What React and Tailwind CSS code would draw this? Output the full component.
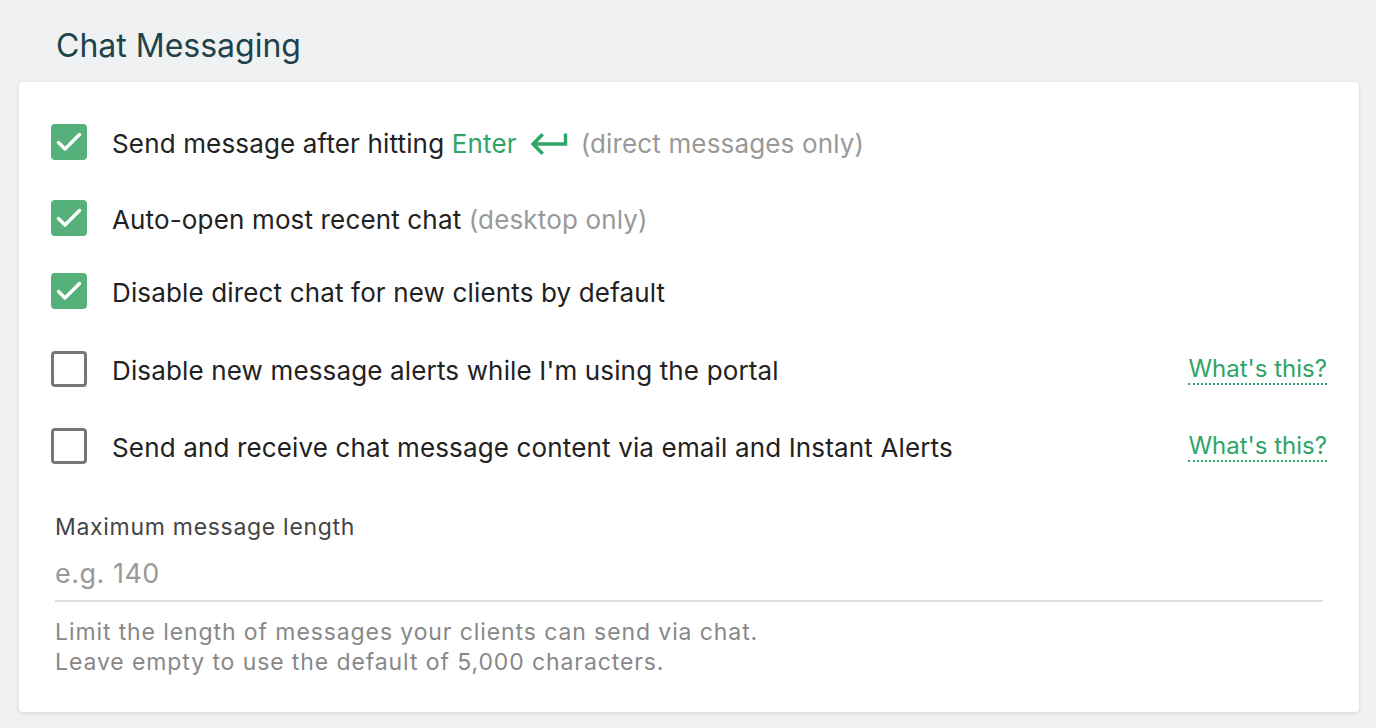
import { useState } from "react";

const font = { fontFamily: "Inter, 'Noto Sans', sans-serif" };

function Box({ checked, onClick }) {
  return checked ? (
    <button
      onClick={onClick}
      className="w-9 h-9 shrink-0 rounded-[4px] bg-[#55b179] flex items-center justify-center"
    >
      <svg width="28" height="28" viewBox="0 0 28 28" fill="none">
        <path d="M3.5 14.5l6.5 6.5L24.5 6.5" stroke="#fff" strokeWidth="3.4" strokeLinecap="round" strokeLinejoin="round" />
      </svg>
    </button>
  ) : (
    <button
      onClick={onClick}
      className="w-9 h-9 shrink-0 rounded-[4px] border-[3px] border-[#777] bg-white"
    />
  );
}

function WhatsThis() {
  return (
    <a className="ml-auto mt-[2px] text-[24px] text-[#2ea566] border-b-2 border-dotted border-[#2ea566] leading-[28px] cursor-pointer">
      What's this?
    </a>
  );
}

export default function App() {
  const [checks, setChecks] = useState([true, true, true, false, false]);
  const toggle = (i) => setChecks((c) => c.map((v, j) => (j === i ? !v : v)));

  return (
    <div className="min-h-screen bg-[#f0f1f3] pl-[19px] pr-[17px] pt-[26px] pb-4" style={font}>
      <h2 className="text-[32px] leading-[40px] text-[#1e444a] ml-[37px] mb-[16px]">Chat Messaging</h2>
      <div className="bg-white rounded-[4px] shadow-[0_1px_4px_rgba(0,0,0,0.12)] px-8 pt-[42px] pb-[35px]">
        <div className="flex flex-col text-[26px] text-[#222]">
          <div className="flex items-center gap-[25px] h-9">
            <Box checked={checks[0]} onClick={() => toggle(0)} />
            <span className="flex items-center pt-[3px] tracking-[0.15px]">
              Send message after hitting&nbsp;<span className="text-[#2ea566]">Enter</span>
              <svg className="ml-[12px] mr-[13px]" width="39" height="24" viewBox="0 0 39 24" fill="none">
                <path d="M36.5 1.5v10.5H4" stroke="#2ea566" strokeWidth="3.4" strokeLinejoin="miter" />
                <path d="M12.5 3.5L4 12l8.5 8.5" stroke="#2ea566" strokeWidth="3.4" strokeLinecap="square" strokeLinejoin="miter" />
              </svg>
              <span className="text-[#999]">(direct messages only)</span>
            </span>
          </div>
          <div className="flex items-center gap-[25px] h-9 mt-[40px]">
            <Box checked={checks[1]} onClick={() => toggle(1)} />
            <span className="pt-[3px] tracking-[0.15px]">
              Auto-open most recent chat <span className="text-[#999]">(desktop only)</span>
            </span>
          </div>
          <div className="flex items-center gap-[25px] h-9 mt-[37px]">
            <Box checked={checks[2]} onClick={() => toggle(2)} />
            <span className="pt-[3px] tracking-[0.15px]">Disable direct chat for new clients by default</span>
          </div>
          <div className="flex items-center gap-[25px] h-9 mt-[42px]">
            <Box checked={checks[3]} onClick={() => toggle(3)} />
            <span className="pt-[3px] tracking-[0.15px]">Disable new message alerts while I'm using the portal</span>
            <WhatsThis />
          </div>
          <div className="flex items-center gap-[25px] h-9 mt-[41px]">
            <Box checked={checks[4]} onClick={() => toggle(4)} />
            <span className="pt-[3px] tracking-[0.15px]">Send and receive chat message content via email and Instant Alerts</span>
            <WhatsThis />
          </div>
        </div>

        <div className="mt-[48px] pl-[4px] pr-[4px]">
          <label className="block text-[23px] leading-[30px] tracking-[0.7px] text-[#444]">Maximum message length</label>
          <input
            type="text"
            placeholder="e.g. 140"
            className="block w-full mt-[14px] pb-[8px] text-[27px] leading-[36px] tracking-[0.5px] text-[#222] placeholder-[#999] border-b-2 border-[#dedede] outline-none"
          />
          <p className="mt-[15px] text-[23px] leading-[30px] tracking-[0.9px] text-[#888]">
            Limit the length of messages your clients can send via chat.
            <br />
            Leave empty to use the default of 5,000 characters.
          </p>
        </div>
      </div>
    </div>
  );
}
